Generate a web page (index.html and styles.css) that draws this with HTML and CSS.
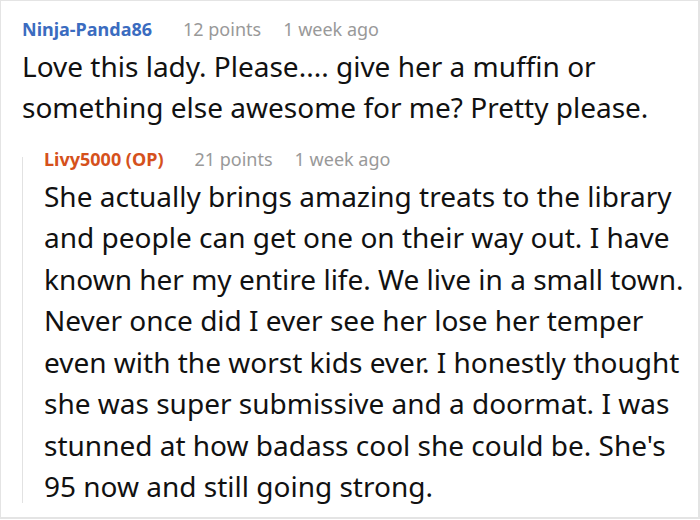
FILE: index.html
```html
<!DOCTYPE html>
<html>
<head>
<meta charset="utf-8">
<link rel="stylesheet" href="styles.css">
</head>
<body>
<div class="card">
  <div class="comment">
    <div class="meta">
      <span class="author">Ninja-Panda86</span>
      <span class="info">12 points</span>
      <span class="info">1 week ago</span>
    </div>
    <p class="text">Love this lady. Please.... give her a muffin or something else awesome for me? Pretty please.</p>
  </div>
  <div class="reply">
    <div class="meta">
      <span class="author op">Livy5000 (OP)</span>
      <span class="info">21 points</span>
      <span class="info">1 week ago</span>
    </div>
    <p class="text">She actually brings amazing treats to the library and people can get one on their way out. I have known her my entire life. We live in a small town. Never once did I ever see her lose her temper even with the worst kids ever. I honestly thought she was super submissive and a doormat. I was stunned at how badass cool she could be. She's 95 now and still going strong.</p>
  </div>
</div>
</body>
</html>
```

FILE: styles.css
```css
html, body {
  margin: 0;
  padding: 0;
  background: #ffffff;
}
.card {
  box-sizing: border-box;
  width: 700px;
  height: 519px;
  border: 1px solid #e4e4e4;
  border-right-width: 2px;
  border-bottom-width: 2px;
  padding: 13px 0 0 21px;
  font-family: "Noto Sans", "Open Sans", sans-serif;
  overflow: hidden;
}
.meta {
  display: flex;
  align-items: baseline;
  gap: 22px;
  font-size: 18px;
  line-height: 30px;
}
.author {
  color: #3b6cc0;
  font-weight: bold;
  margin-right: 9px;
}
.author.op {
  color: #d5511c;
}
.info {
  color: #999999;
}
.text {
  margin: 1.5px 0 0 0;
  font-size: 28px;
  line-height: 41.5px;
  color: #111111;
}
.reply {
  margin-top: 15.5px;
  padding-left: 22px;
  width: 654px;
  background: linear-gradient(#e2e2e2, #e2e2e2) no-repeat 0 13px / 1px calc(100% - 18px);
}
```
